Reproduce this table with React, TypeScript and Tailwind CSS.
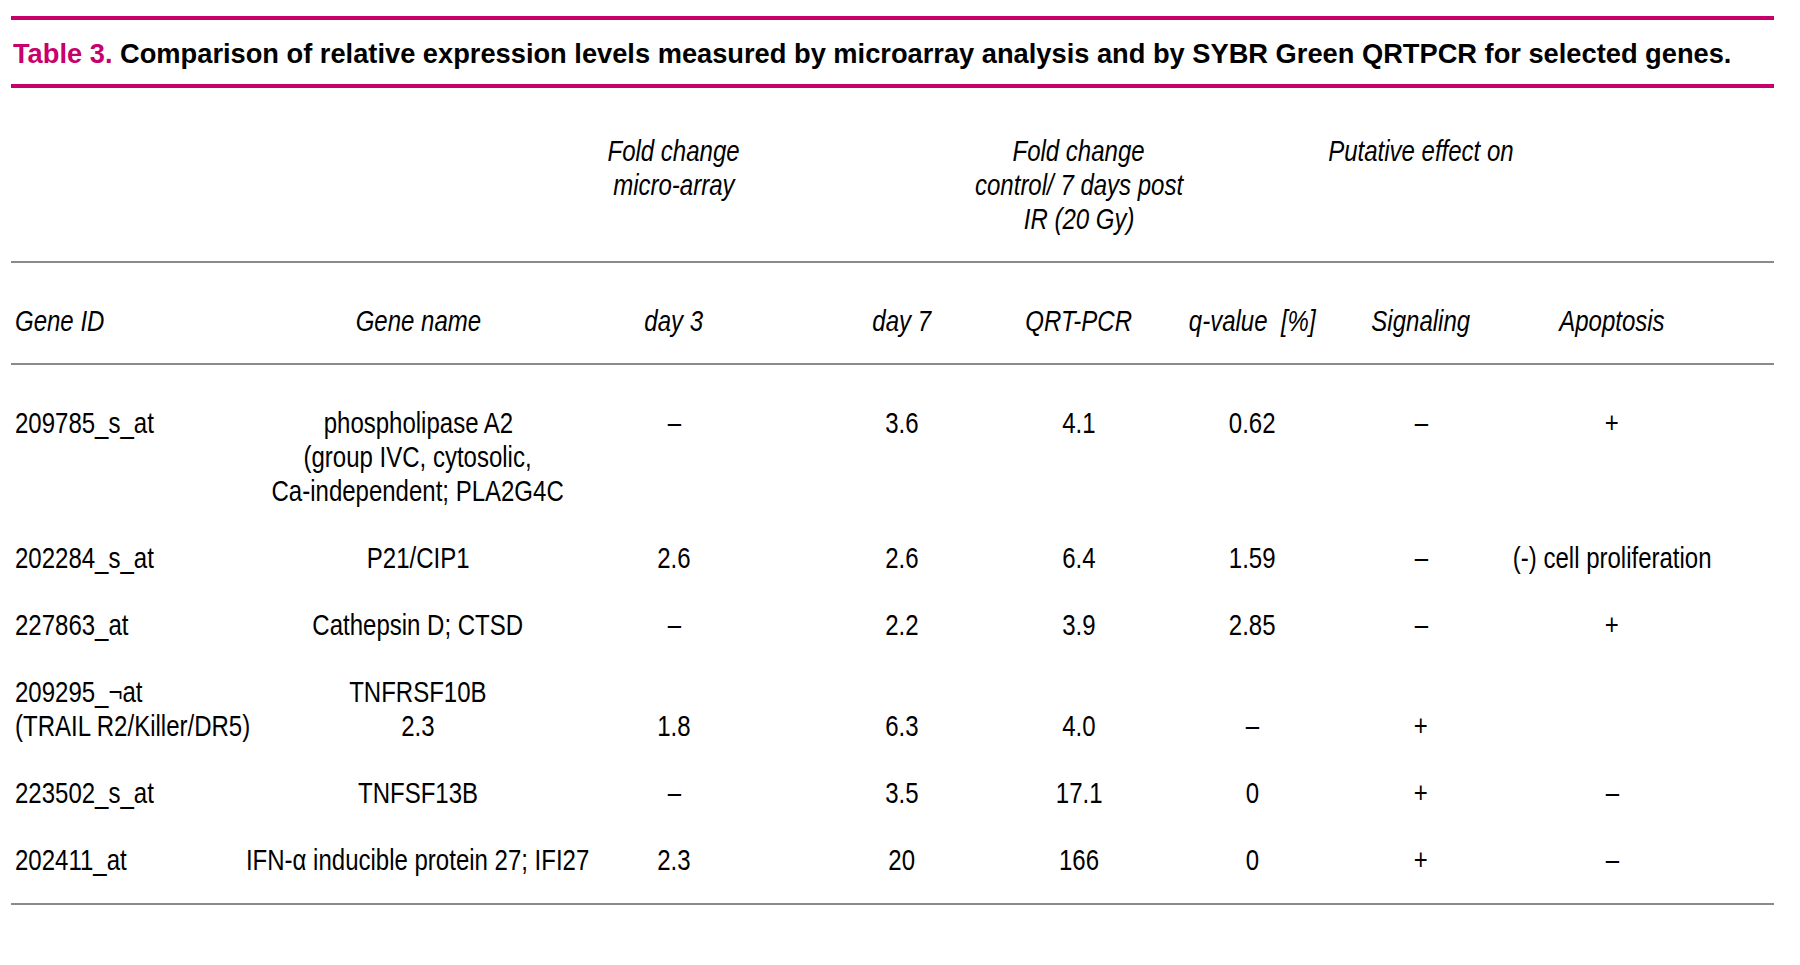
import React from "react";

const cols = "grid grid-cols-[289px_236px_276px_180px_174px_172px_166px_216px_1fr]";

type Row = { cells: React.ReactNode[][]; bottom?: boolean };

const rows: Row[] = [
  {
    cells: [
      ["209785_s_at"],
      ["phospholipase A2", "(group IVC, cytosolic,", "Ca-independent; PLA2G4C"],
      ["–"],
      ["3.6"],
      ["4.1"],
      ["0.62"],
      ["–"],
      ["+"],
    ],
  },
  { cells: [["202284_s_at"], ["P21/CIP1"], ["2.6"], ["2.6"], ["6.4"], ["1.59"], ["–"], ["(-) cell proliferation"]] },
  { cells: [["227863_at"], ["Cathepsin D; CTSD"], ["–"], ["2.2"], ["3.9"], ["2.85"], ["–"], ["+"]] },
  {
    bottom: true,
    cells: [
      ["209295_¬at", "(TRAIL R2/Killer/DR5)"],
      ["TNFRSF10B", "2.3"],
      ["1.8"],
      ["6.3"],
      ["4.0"],
      ["–"],
      ["+"],
      [""],
    ],
  },
  { cells: [["223502_s_at"], ["TNFSF13B"], ["–"], ["3.5"], ["17.1"], ["0"], ["+"], ["–"]] },
  { cells: [["202411_at"], ["IFN-α inducible protein 27; IFI27"], ["2.3"], ["20"], ["166"], ["0"], ["+"], ["–"]] },
];

// narrow grotesque look: Liberation Sans squeezed horizontally
function Cell({ lines, left, bottom }: { lines: React.ReactNode[]; left?: boolean; bottom?: boolean }) {
  return (
    <div
      className={`flex flex-col whitespace-nowrap ${left ? "items-start pl-[4px]" : "items-center"} ${
        bottom ? "justify-end" : "justify-start"
      }`}
    >
      {lines.map((l, i) => (
        <span key={i} className={`inline-block scale-x-[0.8] ${left ? "origin-left" : "origin-center"}`}>
          {l}
        </span>
      ))}
    </div>
  );
}

export default function App() {
  return (
    <div
      className="w-[1800px] h-[965px] bg-white text-black overflow-hidden"
      style={{ fontFamily: '"Liberation Sans", Arial, sans-serif' }}
    >
      <div className="ml-[11px] mr-[26px] pt-[16px]">
        <div className="h-[4px] bg-[#c8006c]" />
        <div className="h-[64px] flex items-center pt-[4px] pl-[2px] text-[27.25px] font-bold leading-none whitespace-nowrap">
          <div>
            <span className="text-[#c8006c]">Table 3.</span> Comparison of relative expression levels measured by
            microarray analysis and by SYBR Green QRTPCR for selected genes.
          </div>
        </div>
        <div className="h-[4px] bg-[#c8006c]" />

        <div className="text-[30px] leading-[34px] italic">
          {/* group header */}
          <div className={`${cols} pt-[46px] pb-[25px]`}>
            <div />
            <div />
            <Cell lines={["Fold change", "micro-array"]} />
            <div />
            <Cell lines={["Fold change", "control/ 7 days post", "IR (20 Gy)"]} />
            <div />
            <Cell lines={["Putative effect on"]} />
          </div>
          <div className="h-[2px] bg-[#8a8a8a]" />

          <div className={`${cols} pt-[41px] pb-[25px]`}>
            <Cell left lines={["Gene ID"]} />
            <Cell lines={["Gene name"]} />
            <Cell lines={["day 3"]} />
            <Cell lines={["day 7"]} />
            <Cell lines={["QRT-PCR"]} />
            <Cell lines={["q-value\u00a0\u00a0[%]"]} />
            <Cell lines={["Signaling"]} />
            <Cell lines={["Apoptosis"]} />
          </div>
          <div className="h-[2px] bg-[#8a8a8a]" />
        </div>

        <div className="text-[30px] leading-[34px] pt-[41px] pb-[26px] flex flex-col gap-y-[33px]">
          {rows.map((r, ri) => (
            <div key={ri} className={cols}>
              {r.cells.map((c, ci) => (
                <Cell key={ci} lines={c} left={ci === 0} bottom={r.bottom} />
              ))}
            </div>
          ))}
        </div>
        <div className="h-[2px] bg-[#8a8a8a]" />
      </div>
    </div>
  );
}
